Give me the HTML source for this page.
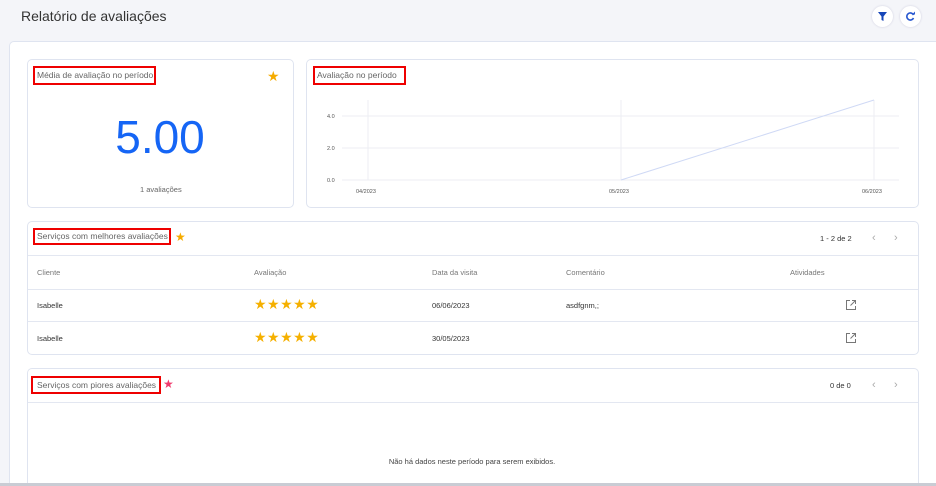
<!DOCTYPE html>
<html><head><meta charset="utf-8"><style>
*{box-sizing:border-box;margin:0;padding:0}
html,body{width:936px;height:486px;overflow:hidden}
body{background:#f4f5f9;font-family:"Liberation Sans",sans-serif;position:relative;color:#444}
.a{position:absolute}
.card{position:absolute;background:#fff;border:1px solid #dfe4f0;border-radius:5px}
.red{position:absolute;border:2px solid #e00;}
.sm{font-family:"Liberation Sans Narrow","Liberation Sans",sans-serif;font-size:7.5px;color:#555;white-space:nowrap}
.lbl{font-size:8.5px;color:#666;white-space:nowrap;font-family:"Liberation Sans Narrow","Liberation Sans",sans-serif}
.hl{position:absolute;height:1px;background:#e3e7f1}
.st{color:#f5b000;font-size:14px;letter-spacing:0.5px}
</style></head><body>
<div class="a" style="left:21px;top:8px;font-size:14px;color:#333">Relatório de avaliações</div>
<div class="a" style="left:872px;top:6px;width:21px;height:21px;border-radius:50%;background:#fff;box-shadow:0 0 2px #ccd"></div>
<svg class="a" style="left:877px;top:11px" width="11" height="11" viewBox="0 0 11 11"><path d="M1 1h9L6.5 5.5V10L4.5 9V5.5z" fill="#1746b8"/></svg>
<div class="a" style="left:900px;top:6px;width:21px;height:21px;border-radius:50%;background:#fff;box-shadow:0 0 2px #ccd"></div>
<svg class="a" style="left:905px;top:11px" width="11" height="11" viewBox="0 0 11 11"><path d="M8.5 4A3.5 3.5 0 1 0 8.5 7" fill="none" stroke="#2858d0" stroke-width="1.6"/><path d="M7 3.5h3v-3" fill="#2858d0"/></svg>
<div class="card" style="left:9px;top:41px;width:927px;height:442px;border-radius:5px 0 0 0;border-right:none;border-bottom:none"></div>

<div class="card" style="left:27px;top:59px;width:267px;height:149px"></div>
<div class="red" style="left:33px;top:66px;width:123px;height:19px"></div>
<div class="a lbl" style="left:37px;top:70px">Média de avaliação no período</div>
<div class="a" style="left:267px;top:68px;color:#f5ab00;font-size:14px">★</div>
<div class="a" style="left:0;width:320px;text-align:center;top:110px;font-size:46px;color:#1565f5">5.00</div>
<div class="a sm" style="left:140px;top:185px;color:#666">1 avaliações</div>

<div class="card" style="left:306px;top:59px;width:613px;height:149px"></div>
<div class="red" style="left:313px;top:66px;width:93px;height:19px"></div>
<div class="a lbl" style="left:317px;top:70px">Avaliação no período</div>
<svg class="a" style="left:306px;top:59px" width="613" height="149">
<g stroke="#eceef3" stroke-width="1"><line x1="36" y1="57" x2="593" y2="57"/><line x1="36" y1="89" x2="593" y2="89"/><line x1="36" y1="121" x2="593" y2="121"/><line x1="62" y1="41" x2="62" y2="121"/><line x1="315" y1="41" x2="315" y2="121"/><line x1="568" y1="41" x2="568" y2="121"/></g>
<line x1="315" y1="121" x2="568" y2="41" stroke="#cfd9f5" stroke-width="1"/>
<g font-size="5.5" fill="#555" font-family="Liberation Sans"><text x="21" y="59">4.0</text><text x="21" y="91">2.0</text><text x="21" y="123">0.0</text><text x="50" y="134">04/2023</text><text x="303" y="134">05/2023</text><text x="556" y="134">06/2023</text></g>
</svg>

<div class="card" style="left:27px;top:221px;width:892px;height:134px"></div>
<div class="red" style="left:33px;top:228px;width:138px;height:17px"></div>
<div class="a lbl" style="left:37px;top:231px">Serviços com melhores avaliações</div>
<div class="a" style="left:175px;top:230px;color:#f5ab00;font-size:12px">★</div>
<div class="a sm" style="left:820px;top:234px;color:#333">1 - 2 de 2</div>
<div class="a" style="left:872px;top:232px;color:#aaa;font-size:11px">‹</div>
<div class="a" style="left:894px;top:232px;color:#aaa;font-size:11px">›</div>
<div class="hl" style="left:28px;top:255px;width:890px"></div>
<div class="a sm" style="left:37px;top:268px;color:#777">Cliente</div>
<div class="a sm" style="left:254px;top:268px;color:#777">Avaliação</div>
<div class="a sm" style="left:432px;top:268px;color:#777">Data da visita</div>
<div class="a sm" style="left:566px;top:268px;color:#777">Comentário</div>
<div class="a sm" style="left:790px;top:268px;color:#777">Atividades</div>
<div class="hl" style="left:28px;top:289px;width:890px"></div>
<div class="a sm" style="left:37px;top:301px;color:#333">Isabelle</div>
<div class="a st" style="left:254px;top:296px">★★★★★</div>
<div class="a sm" style="left:432px;top:301px;color:#333">06/06/2023</div>
<div class="a sm" style="left:566px;top:301px;color:#333">asdfgnm,;</div>
<svg class="a" style="left:845px;top:299px" width="12" height="12" viewBox="0 0 12 12"><path d="M5 1.5H1.5v9h9V7M7 1.5h3.5V5M10.5 1.5L5.5 6.5" fill="none" stroke="#777" stroke-width="1"/></svg>
<div class="hl" style="left:28px;top:321px;width:890px"></div>
<div class="a sm" style="left:37px;top:334px;color:#333">Isabelle</div>
<div class="a st" style="left:254px;top:329px">★★★★★</div>
<div class="a sm" style="left:432px;top:334px;color:#333">30/05/2023</div>
<svg class="a" style="left:845px;top:332px" width="12" height="12" viewBox="0 0 12 12"><path d="M5 1.5H1.5v9h9V7M7 1.5h3.5V5M10.5 1.5L5.5 6.5" fill="none" stroke="#777" stroke-width="1"/></svg>

<div class="card" style="left:27px;top:368px;width:892px;height:115px;border-bottom:none;border-radius:5px 5px 0 0"></div>
<div class="red" style="left:31px;top:376px;width:130px;height:18px"></div>
<div class="a lbl" style="left:37px;top:380px">Serviços com piores avaliações</div>
<div class="a" style="left:163px;top:377px;color:#f03c6e;font-size:12px">★</div>
<div class="a sm" style="left:830px;top:381px;color:#333">0 de 0</div>
<div class="a" style="left:872px;top:379px;color:#aaa;font-size:11px">‹</div>
<div class="a" style="left:894px;top:379px;color:#aaa;font-size:11px">›</div>
<div class="hl" style="left:28px;top:402px;width:890px"></div>
<div class="a sm" style="left:0;width:944px;text-align:center;top:457px;color:#444">Não há dados neste período para serem exibidos.</div>
<div class="a" style="left:0;top:483px;width:936px;height:3px;background:#c9ccd4"></div>
</body></html>
